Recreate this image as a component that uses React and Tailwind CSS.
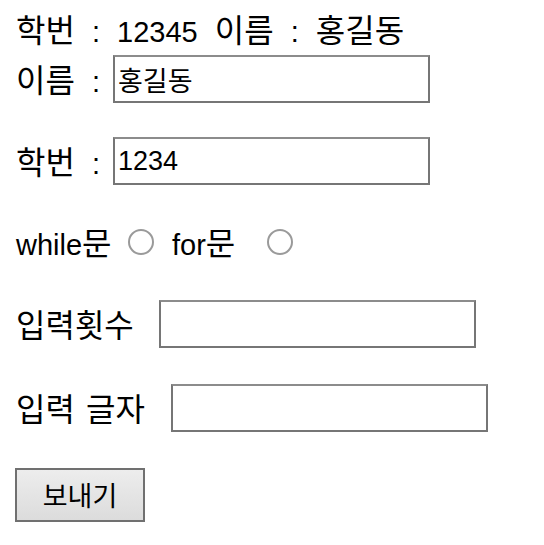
import React from 'react';

const font = "font-['Liberation_Sans','Noto_Sans_CJK_KR',sans-serif]";

// Hangul is drawn a little larger than the Latin text, as in the reference
const K = ({ children }) => <span className="text-[32px] font-['Noto_Sans_CJK_KR',sans-serif]">{children}</span>;

const Field = ({ value = '', className = '' }) => (
    <input
        type="text"
        defaultValue={value}
        className={`h-[48px] w-[317px] border-2 border-[#767676] border-t-[#8c8c8c] bg-white px-[3px] text-[27px] text-black outline-none ${font} ${className}`}
    />
);

const Radio = ({ className = '' }) => (
    <input
        type="radio"
        name="loop"
        className={`appearance-none w-[26px] h-[26px] rounded-full border-2 border-[#9a9a9a] bg-white ${className}`}
    />
);

export default function App() {
    return (
        <div className={`bg-white min-h-[545px] pl-[16px] pt-[4px] text-[29px] text-black [word-spacing:9px] ${font}`}>
            <div className="h-[50px] flex items-center">
                <span className="whitespace-pre"><K>학번</K> : 12345 <K>이름</K> : <K>홍길동</K></span>
            </div>

            <div className="h-[50px] flex items-center">
                <span className="w-[97px] whitespace-pre"><K>이름</K> :</span>
                <Field value="홍길동" />
            </div>

            <div className="h-[50px] flex items-center mt-[32px]">
                <span className="w-[97px] whitespace-pre"><K>학번</K> :</span>
                <Field value="1234" />
            </div>

            <div className="h-[50px] flex items-center mt-[31px]">
                <span className="w-[112px]">while<K>문</K></span>
                <Radio />
                <span className="ml-[18px] w-[95px]">for<K>문</K></span>
                <Radio />
            </div>

            <div className="h-[50px] flex items-center mt-[32px]">
                <span className="w-[143px]"><K>입력횟수</K></span>
                <Field />
            </div>

            <div className="h-[50px] flex items-center mt-[34px]">
                <span className="w-[155px] whitespace-pre [word-spacing:4px]"><K>입력 글자</K></span>
                <Field />
            </div>

            <div className="mt-[35px]">
                <button
                    type="button"
                    className={`h-[54px] w-[130px] -ml-[1px] border-2 border-[#707070] bg-gradient-to-b from-[#ededed] to-[#dcdcdc] text-[27px] text-black font-['Noto_Sans_CJK_KR',sans-serif]`}
                >
                    보내기
                </button>
            </div>
        </div>
    );
}
